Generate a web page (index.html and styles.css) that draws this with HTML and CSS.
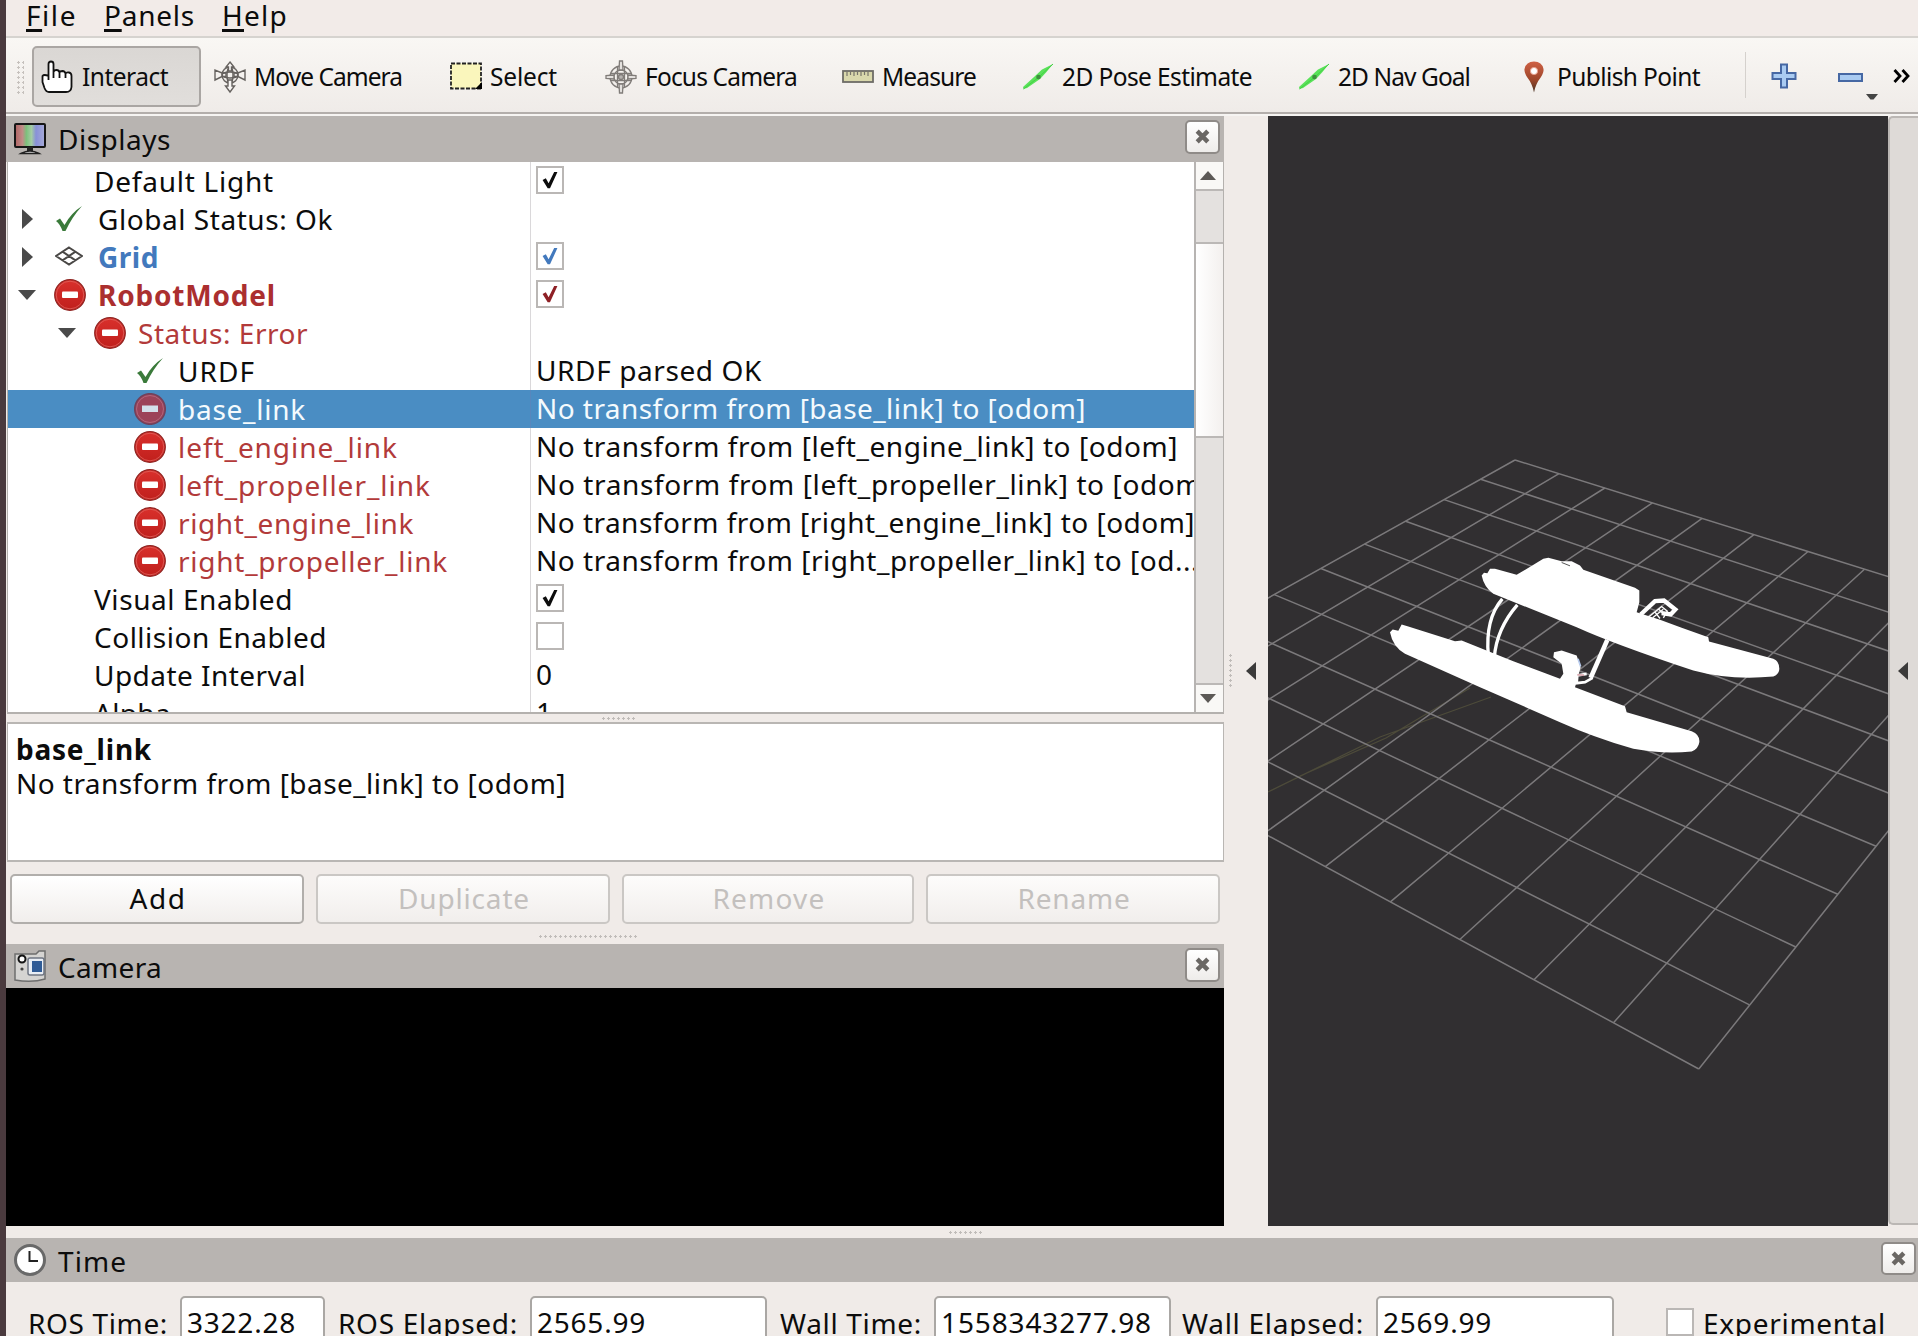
FILE: index.html
```html
<!DOCTYPE html>
<html lang="en">
<head>
<meta charset="utf-8">
<title>RViz</title>
<link rel="stylesheet" href="styles.css">
</head>
<body>
<svg width="0" height="0" class="defs">
  <defs>
    <linearGradient id="red" x1="0" y1="0" x2="0" y2="1"><stop offset="0" stop-color="#d9302c"/><stop offset="1" stop-color="#c01f1c"/></linearGradient>
    <linearGradient id="pin" x1="0" y1="0" x2="0" y2="1"><stop offset="0" stop-color="#cf6145"/><stop offset=".6" stop-color="#9c4529"/><stop offset="1" stop-color="#4b3526"/></linearGradient>
    <linearGradient id="rgb"><stop offset="0" stop-color="#b06464"/><stop offset=".25" stop-color="#c08c88"/><stop offset=".38" stop-color="#7cc07c"/><stop offset=".55" stop-color="#a4cca4"/><stop offset=".7" stop-color="#8890d8"/><stop offset="1" stop-color="#a8acd8"/></linearGradient>
    <symbol id="error" viewBox="0 0 32 32"><circle cx="16" cy="16" r="15.3" fill="url(#red)" stroke="#8e2320" stroke-width="1.2"/><circle cx="16" cy="16" r="13.8" fill="none" stroke="#e0645e" stroke-width=".8"/><rect x="8" y="12.5" width="16" height="6.5" rx="1" fill="#fff"/></symbol>
    <symbol id="ok" viewBox="0 0 28 28"><path d="M1 16 L5 13.5 L9.5 20 Q16 8 27 1 Q17 12 10.500 26 L7.500 26 Q5 19 1 16Z" fill="#3a7a3a"/></symbol>
    <symbol id="tick" viewBox="0 0 28 28"><path d="M6 14 L9.500 12 L12.500 17.500 L18.500 5.500 L22 5.500 L14 23 L11.500 23Z" fill="currentColor"/></symbol>
    <symbol id="close" viewBox="0 0 16 16"><path d="M3 3 L13 13 M13 3 L3 13" stroke="#6a6764" stroke-width="4.200"/></symbol>
    <symbol id="arrow" viewBox="0 0 32 28"><path d="M31 1 L20 6.500 L12 14 L1 24 L1.500 26 L5 25 L18 16 L24 9.500Z" fill="#5ae25a"/><path d="M31 1 L17 14 L1.500 26" stroke="#45d045" fill="none"/><circle cx="16.500" cy="14" r="2.300" fill="#3e8f3e"/></symbol>
  </defs>
</svg>

<div class="window">
  <nav class="menubar">
    <span class="t m-file" data-w="48"><u>F</u>ile</span><span class="t m-panels" data-w="88"><u>P</u>anels</span><span class="t m-help" data-w="63"><u>H</u>elp</span>
  </nav>

  <div class="toolbar">
    <div class="handle"></div>
    <div class="tools">
      <div class="tool active"><svg width="32" height="34" viewBox="0 0 32 34"><path d="M7.500 20 V4 Q7.500 1.500 10 1.500 Q12.500 1.500 12.500 4 V12 Q13 10 15.500 10 Q18 10 18.500 12.500 Q19 11 21.500 11 Q24 11.200 24.500 13.500 Q25.500 12 28 12.500 Q30.500 13 30.500 16 V27 Q30 32 25 32 H8 Q5 32 3.500 28 L1.500 22 V16 Q3 14 7.500 16 M12.500 12 V18 M18.500 13 V18 M24.500 14 V18" fill="#fff" stroke="#111" stroke-width="1.800"/></svg><span class="t" data-w="83">Interact</span></div>
      <div class="tool"><svg width="32" height="34" viewBox="0 0 32 34"><g fill="none" stroke="#66625f" stroke-width="1.400"><circle cx="16" cy="15" r="8"/><ellipse cx="16" cy="15" rx="8" ry="3"/><ellipse cx="16" cy="15" rx="3" ry="8"/><path fill="#f8f6f4" d="M16 2 L20 7 H17.500 V11 H14.500 V7 H12Z M16 32 L20.500 26 H18 V20 H14 V26 H11.500Z"/><path d="M1 10 V20 L8 16.500 H12 V13 H8Z M31 10 V20 L24 16.500 H20 V13 H24Z"/></g></svg><span class="t" data-w="145">Move Camera</span></div>
      <div class="tool"><svg width="32" height="34" viewBox="0 0 32 34"><rect x="1" y="3.500" width="30" height="25" fill="#faf6bc" stroke="#222" stroke-width="1.800" stroke-dasharray="4 1.500"/><path d="M25 29 H32 V22Z" fill="#000"/></svg><span class="t" data-w="64">Select</span></div>
      <div class="tool"><svg width="32" height="34" viewBox="0 0 32 34"><g fill="none" stroke="#807c79" stroke-width="1.300"><circle cx="16" cy="17" r="11"/><circle cx="16" cy="17" r="7"/><path d="M6 13.500 H26 M6 20.500 H26 M12.500 7 V27 M19.500 7 V27"/><path fill="#e4e1de" d="M14.500 1 H17.500 L18 10 H14Z M14.500 33 H17.500 L18 24 H14Z M1 15.500 V18.500 L9 19 V15Z M31 15.500 V18.500 L23 19 V15Z"/><circle cx="16" cy="17" r="2.500" fill="#b5b2af"/></g></svg><span class="t" data-w="149">Focus Camera</span></div>
      <div class="tool"><svg width="32" height="34" viewBox="0 0 32 34"><rect x="1" y="11" width="30" height="11" fill="#d9d8ac" stroke="#6d6c66" stroke-width="1.800"/><path d="M5 12v4M8.500 12v3M12 12v4M15.500 12v3M19 12v4M22.500 12v3M26 12v4" stroke="#77756a" stroke-width="1.200"/></svg><span class="t" data-w="91">Measure</span></div>
      <div class="tool"><svg width="32" height="28"><use href="#arrow"/></svg><span class="t" data-w="187">2D Pose Estimate</span></div>
      <div class="tool"><svg width="32" height="28"><use href="#arrow"/></svg><span class="t" data-w="129">2D Nav Goal</span></div>
      <div class="tool"><svg width="32" height="34" viewBox="0 0 32 34"><path d="M17 32.500 Q15.500 24 10 17 Q7 12 7.500 9 Q9 1.500 17 1.500 Q25 1.500 26.500 9 Q27 12 24 17 Q18.500 24 17 32.500Z" fill="url(#pin)"/><circle cx="17" cy="11" r="3.600" fill="#fff" stroke="#e8a08c"/></svg><span class="t" data-w="140">Publish Point</span></div>
    </div>
    <div class="tool-end">
      <svg width="26" height="26" viewBox="0 0 26 26"><path d="M10 1.500h6v8.500h8.500v6H16v8.500h-6V16H1.500v-6H10Z" fill="#a9cbf2" stroke="#4668a4" stroke-width="2"/></svg>
      <svg class="minus" width="42" height="40" viewBox="0 0 42 40"><rect x="2" y="13" width="23" height="7" fill="#a9cbf2" stroke="#4668a4" stroke-width="2"/><path d="M29 33h12l-4.500 5.500h-3Z" fill="#444"/></svg>
      <svg class="more" width="18" height="16" viewBox="0 0 18 16"><path d="M1.500 2 L7 8 L1.500 14 M9.500 2 L15 8 L9.500 14" fill="none" stroke="#000" stroke-width="2.800"/></svg>
    </div>
  </div>

  <main class="workspace">
    <section class="left">
      <header class="dock-title displays"><svg width="32" height="34" viewBox="0 0 32 34"><rect x="1" y="2" width="30" height="23" rx="1" fill="url(#rgb)" stroke="#161616" stroke-width="2"/><path d="M13 25h6v4h-6z" fill="#222"/><path d="M7 31.500q9-5 18 0z" fill="#ddd" stroke="#222" stroke-width="1.500"/></svg><span class="t" data-w="110">Displays</span><button class="close"><svg width="17" height="17"><use href="#close"/></svg></button></header>

      <div class="tree">
        <div class="rows">
          <div class="row"><div class="name l1"><span class="t" data-w="177">Default Light</span></div><div class="val"><i class="cb"><svg width="26" height="26"><use href="#tick"/></svg></i></div></div>
          <div class="row"><div class="name l0"><i class="right"></i><svg class="ic" width="28" height="28"><use href="#ok"/></svg><span class="t" data-w="232">Global Status: Ok</span></div><div class="val"></div></div>
          <div class="row"><div class="name l0"><i class="right"></i><svg class="ic" width="28" height="28" viewBox="0 0 28 28"><path d="M14 4.500 L27 13 L14 21.500 L1 13Z M7.500 8.700 L20.500 17.300 M20.500 8.700 L7.500 17.300" fill="none" stroke="#4a4846" stroke-width="2"/></svg><span class="t b blue" data-w="58">Grid</span></div><div class="val"><i class="cb blue"><svg width="26" height="26"><use href="#tick"/></svg></i></div></div>
          <div class="row"><div class="name l0"><i class="down"></i><svg class="er" width="32" height="32"><use href="#error"/></svg><span class="t b red" data-w="175">RobotModel</span></div><div class="val"><i class="cb darkred"><svg width="26" height="26"><use href="#tick"/></svg></i></div></div>
          <div class="row"><div class="name l2"><i class="down"></i><svg class="er" width="32" height="32"><use href="#error"/></svg><span class="t red" data-w="167">Status: Error</span></div><div class="val"></div></div>
          <div class="row"><div class="name l3"><svg class="ic" width="28" height="28"><use href="#ok"/></svg><span class="t" data-w="74">URDF</span></div><div class="val"><span class="t" data-w="223">URDF parsed OK</span></div></div>
          <div class="row sel"><div class="name l3"><svg class="er" width="32" height="32" viewBox="0 0 32 32"><circle cx="16" cy="16" r="15.300" fill="#9c4259" stroke="#70425c" stroke-width="1.500"/><circle cx="16" cy="16" r="13.500" fill="none" stroke="#b2667c"/><rect x="8" y="12.500" width="16" height="6.500" fill="#d3dfeb"/></svg><span class="t" data-w="125">base_link</span></div><div class="val"><span class="t" data-w="547">No transform from [base_link] to [odom]</span></div></div>
          <div class="row"><div class="name l3"><svg class="er" width="32" height="32"><use href="#error"/></svg><span class="t red" data-w="217">left_engine_link</span></div><div class="val"><span class="t" data-w="639">No transform from [left_engine_link] to [odom]</span></div></div>
          <div class="row"><div class="name l3"><svg class="er" width="32" height="32"><use href="#error"/></svg><span class="t red" data-w="250">left_propeller_link</span></div><div class="val"><span class="t" data-w="673">No transform from [left_propeller_link] to [odom]</span></div></div>
          <div class="row"><div class="name l3"><svg class="er" width="32" height="32"><use href="#error"/></svg><span class="t red" data-w="233">right_engine_link</span></div><div class="val"><span class="t" data-w="656">No transform from [right_engine_link] to [odom]</span></div></div>
          <div class="row"><div class="name l3"><svg class="er" width="32" height="32"><use href="#error"/></svg><span class="t red" data-w="267">right_propeller_link</span></div><div class="val"><span class="t" data-w="660">No transform from [right_propeller_link] to [od...</span></div></div>
          <div class="row"><div class="name l1"><span class="t" data-w="196">Visual Enabled</span></div><div class="val"><i class="cb"><svg width="26" height="26"><use href="#tick"/></svg></i></div></div>
          <div class="row"><div class="name l1"><span class="t" data-w="230">Collision Enabled</span></div><div class="val"><i class="cb"></i></div></div>
          <div class="row"><div class="name l1"><span class="t" data-w="209">Update Interval</span></div><div class="val"><span class="t">0</span></div></div>
          <div class="row"><div class="name l1"><span class="t" data-w="74">Alpha</span></div><div class="val"><span class="t">1</span></div></div>
        </div>
        <div class="scroll"><div class="sbtn"><i class="up"></i></div><div class="track"><div class="thumb"></div></div><div class="sbtn end"><i class="dn"></i></div></div>
      </div>

      <div class="split thin"><i class="dots"></i></div>
      <div class="desc"><div class="t b" data-w="133">base_link</div><div class="t" data-w="547">No transform from [base_link] to [odom]</div></div>
      <div class="buttons"><button><span class="t" data-w="54">Add</span></button><button disabled><span class="t" data-w="129">Duplicate</span></button><button disabled><span class="t" data-w="110">Remove</span></button><button disabled><span class="t" data-w="110">Rename</span></button></div>
      <div class="split"><i class="dots long"></i></div>

      <header class="dock-title"><svg width="32" height="34" viewBox="0 0 32 34"><path d="M1 5 H22 L25 2 H31 V30 Q18 34 1 31Z" fill="#d5d4d2" stroke="#6d6d6d" stroke-width="1.500"/><circle cx="8" cy="10" r="3.500" fill="#fff" stroke="#111" stroke-width="2"/><circle cx="8" cy="20" r="1.600" fill="#444"/><rect x="14" y="9" width="16" height="17" rx="2" fill="#e9eef5" stroke="#6f7683" stroke-width="1.500"/><rect x="18" y="12" width="10" height="11" fill="#2f5b96"/></svg><span class="t" data-w="101">Camera</span><button class="close"><svg width="17" height="17"><use href="#close"/></svg></button></header>
      <div class="camera-view"></div>
    </section>

    <div class="collapse"><i class="vdots"></i><i class="left-tri"></i></div>

    <section class="view3d">
      <svg width="620" height="1110" viewBox="1268 116 620 1110">
        <path class="axis" d="M1268 792 L1380 737 L1491 697 M1470 688 L1386 738 L1300 776"/>
        <g class="grid">
          <path d="M1515 460L1052.200 718.700M1559 473.700L1100.800 745M1604.800 488L1152.100 772.800M1652.400 502.900L1206.500 802.300M1702.100 518.400L1264.100 833.500M1753.900 534.600L1325.300 866.600M1808 551.500L1390.400 901.900M1864.500 569.200L1459.800 939.500M1923.600 587.600L1534 979.700M1985.500 606.900L1613.500 1022.700M2050.400 627.200L1698.800 1069"/>
          <path d="M1515 460L2050.400 627.200M1480.600 479.200L2026.500 657.200M1444.200 499.600L2000.900 689.400M1405.600 521.200L1973.300 724.100M1364.600 544.100L1943.500 761.500M1320.900 568.500L1911.200 802.100M1274.300 594.600L1876.100 846.200M1224.500 622.400L1837.800 894.300M1171.200 652.200L1795.800 947M1113.900 684.200L1749.500 1004.900M1052.200 718.700L1698.800 1069"/>
        </g>
        <g transform="translate(1380 540.500) scale(.33333)">
          <path fill="#fff" d="M305 105L312 97L322 98L330 85L345 85L410 103L490 55L505 52L545 62L575 62L600 75L610 88L765 142L778 150L778 185L770 215L840 238L905 262L985 290L987 303L1180 355Q1198 362 1198 385Q1198 402 1180 408Q1050 420 940 390Q700 310 590 260L340 160Q312 140 305 105Z"/>
          <path fill="#fff" d="M30 275L38 267L55 271L65 252L85 258L225 302L245 300L400 362L540 415L550 400L545 370L520 350L522 335L545 330L590 345L602 380L585 440L735 497L740 515L935 572Q960 582 958 605Q955 625 935 633Q850 642 760 625Q640 590 540 545L300 440L75 340Q38 318 30 275Z"/>
          <g fill="none" stroke="#fff" stroke-width="10"><path d="M367 175Q315 235 325 345M412 193Q350 265 343 350"/><path stroke-width="14" d="M682 298L632 412"/><path stroke-width="8" d="M638 412L615 425L590 428L592 405L620 400"/><path stroke-width="13" d="M782 222L825 182L852 180L886 207L872 222L845 218"/><path stroke-width="4" d="M805 230L845 198L862 212L850 232M818 232L850 206M825 215L840 234M835 205L855 225"/></g>
          <path d="M545 66L570 76" stroke="#555" stroke-width="3"/><path d="M594 355L602 378" stroke="#b9cdf0" stroke-width="5"/><path d="M592 403L612 404" stroke="#c88690" stroke-width="4"/>
        </g>
      </svg>
    </section>
    <div class="right-bar"><i class="left-tri"></i></div>
  </main>

  <div class="split wide"><i class="dots"></i></div>
  <header class="dock-title time"><svg width="32" height="34" viewBox="0 0 32 34"><circle cx="16" cy="17" r="14.500" fill="#fff" stroke="#696969" stroke-width="3"/><path d="M15.500 8V18H24" fill="none" stroke="#222" stroke-width="2"/></svg><span class="t" data-w="66">Time</span><button class="close"><svg width="17" height="17"><use href="#close"/></svg></button></header>
  <div class="times">
    <label class="lb"><span class="t" data-w="137">ROS Time:</span></label><div class="field"><span class="t" data-w="106">3322.28</span></div>
    <label class="lb"><span class="t" data-w="177">ROS Elapsed:</span></label><div class="field"><span class="t" data-w="106">2565.99</span></div>
    <label class="lb"><span class="t" data-w="139">Wall Time:</span></label><div class="field"><span class="t" data-w="208">1558343277.98</span></div>
    <label class="lb"><span class="t" data-w="179">Wall Elapsed:</span></label><div class="field"><span class="t" data-w="106">2569.99</span></div>
    <div class="exp"><i class="cb"></i><span class="t" data-w="180">Experimental</span></div>
  </div>
</div>
<script src="fit.js"></script>
</body>
</html>
```
FILE: fit.js
```js
// Tracks each label so that it fills its nominal width in whichever font is installed.
document.querySelectorAll('.t[data-w]').forEach(function (el) {
  var range = document.createRange();
  range.selectNodeContents(el);
  var natural = range.getBoundingClientRect().width;
  var chars = el.textContent.length;
  el.style.letterSpacing = ((Number(el.dataset.w) + 3 - natural) / chars) + 'px';
});
```
FILE: styles.css
```css
* { box-sizing: border-box; }
body {
  margin: 0;
  width: 1918px;
  height: 1336px;
  overflow: hidden;
  background: #f0ebe8;
  color: #0c0c0c;
  font: 28px/38px "Noto Sans", "Open Sans", sans-serif;
}
.defs { position: absolute; }
i { display: block; flex: none; }
svg { display: block; flex: none; }
button { padding: 0; font: inherit; color: inherit; }
.t { white-space: pre; flex: none; }
.b { font-weight: 700; }
.blue { color: #4279bd; }
.red { color: #b23a3a; }
.b.red { color: #ab2f2f; }
.darkred { color: #8e2025; }

.window { height: 1336px; border-left: 6px solid #4a3a3e; display: flex; flex-direction: column; overflow: hidden; }

.menubar { height: 38px; flex: none; display: flex; padding-left: 20px; border-bottom: 2px solid #d6d3cf; background: #f2ebe8; line-height: 31px; }
.menubar u { text-decoration: underline; text-decoration-thickness: 3px; text-underline-offset: 3px; text-decoration-skip-ink: none; }
.m-file { width: 78px; }
.m-panels { width: 118px; }

.toolbar { height: 78px; flex: none; display: flex; border-bottom: 2px solid #f6f4f2; box-shadow: inset 0 -2px #b3aeab; background: linear-gradient(#f9f7f4, #efebe8); font-size: 24.500px; }
.handle { width: 8px; height: 34px; margin: 22px 8px 0 10px; background: radial-gradient(circle, #c6c1bd 1px, transparent 1.300px) 0 0 / 5px 5px; }
.tools { display: grid; grid-template-columns: 172px 236px 155px 237px 180px 276px 219px 238px; padding: 8px 0 9px; }
.tool { display: flex; align-items: center; padding-left: 10px; }
.tool .t { margin-left: 8px; }
.tool.active { width: 169px; height: 61px; padding-left: 8px; border: 2px solid #aaa6a3; border-radius: 5px; background: linear-gradient(#dad7d4, #e1dedb); }
.tool.active svg { margin-left: -1px; }
.tool.active .t { margin-left: 9px; }
.tool-end { flex: 1; display: flex; align-items: center; height: 46px; margin-top: 14px; border-left: 1px solid #d5d1cd; padding: 1px 0 0 25px; }
.minus { margin: 10px 14px 0 40px; }

.workspace { height: 1110px; flex: none; display: flex; }
.left { width: 1218px; flex: none; display: flex; flex-direction: column; }
.dock-title { height: 44px; flex: none; display: flex; align-items: center; padding: 0 4px 0 8px; background: #b8b4b1; }
.dock-title.displays { height: 46px; }
.dock-title .t { margin: 1px 0 0 12px; }
.dock-title.displays .t { margin-top: -1px; }
.close { width: 35px; height: 34px; margin: 0 0 3px auto; display: flex; align-items: center; justify-content: center; background: linear-gradient(#fff, #eeecea); border: 2px solid #8f8b88; border-radius: 5px; }
.displays .close { margin-bottom: 5px; }

.tree { height: 552px; flex: none; margin-left: 1px; display: flex; overflow: hidden; background: #fff; border: solid #b4b1ae; border-width: 0 1px 2px; }
.rows { width: 1186px; flex: none; overflow: hidden; }
.row { height: 38px; display: flex; }
.name { width: 523px; flex: none; display: flex; align-items: center; border-right: 1px solid #dad8da; }
.l1 { padding-left: 86px; }
.l0 { padding-left: 12px; }
.l2 { padding-left: 52px; }
.l3 { padding-left: 126px; }
.name .t { margin-top: -1px; }
.ic { margin: 0 14px 0 2px; }
.er { margin: 0 12px 1px 0; }
.name .right + .ic { margin-left: 22px; margin-right: 15px; }
.right { margin-left: 2px; border: solid transparent; border-width: 10px 0 10px 11px; border-left-color: #4a4a4a; }
.down { margin-left: -2px; border: solid transparent; border-width: 10px 9px 0; border-top-color: #4a4a4a; }
.down + .er { margin-left: 18px; }
.val { flex: 1; min-width: 0; display: flex; padding-left: 5px; overflow: hidden; }
.cb { width: 28px; height: 28px; margin-top: 4px; border: 2px solid #bab7b5; background: #fff; display: flex; align-items: center; justify-content: center; }
.row .val .t { margin-top: -1px; }
.sel { background: #4a8dc3; color: #f4fafd; }
.sel .name { border-color: #5787bd; }
.scroll { flex: 1; display: flex; flex-direction: column; border-left: 2px solid #b7b4b2; background: #e4e1df; }
.sbtn { height: 29px; flex: none; display: flex; align-items: center; justify-content: center; padding-right: 3px; background: #f9f8f6; border-bottom: 2px solid #bbb8b6; }
.sbtn.end { border-bottom: 0; border-top: 2px solid #bbb8b6; }
.up { border: solid transparent; border-width: 0 8px 9px; border-bottom-color: #5c5956; }
.dn { border: solid transparent; border-width: 9px 8px 0; border-top-color: #5c5956; }
.track { flex: 1; padding-top: 51px; }
.thumb { height: 196px; background: linear-gradient(90deg, #fff, #f3f0ee); border: solid #bbb8b6; border-width: 2px 0; }

.split { height: 20px; flex: none; display: flex; justify-content: center; align-items: center; }
.split.thin { height: 8px; }
.split.wide { height: 12px; }
.dots { width: 34px; height: 5px; margin-left: 5px; background: radial-gradient(circle, #c0bcb9 1px, transparent 1.300px) 0 0 / 5px 5px; }
.dots.long { width: 100px; margin-right: 60px; margin-top: 4px; }
.desc { height: 140px; flex: none; margin-left: 1px; padding: 8px 0 0 8px; border: 2px solid #b9b6b3; border-left-width: 1px; border-right-width: 1px; background: #fff; line-height: 34px; }
.desc .t { width: max-content; }
.buttons { flex: none; display: grid; grid-template-columns: 294px 294px 292px 294px; column-gap: 12px; height: 62px; padding: 12px 0 0 4px; }
.buttons button { height: 50px; display: flex; justify-content: center; align-items: center; padding: 0 0 2px 2px; border: 2px solid #b1aeab; border-radius: 5px; background: linear-gradient(#fff, #f1eeec); }
.buttons button:disabled { color: #c3c0be; border-color: #cac7c4; background: linear-gradient(#fdfcfb, #f1eeec); }
.camera-view { flex: 1; background: #000; }

.collapse { width: 44px; flex: none; display: flex; align-items: center; padding-left: 4px; }
.vdots { width: 5px; height: 36px; margin-right: 13px; background: radial-gradient(circle, #c0bcb9 1px, transparent 1.300px) 0 0 / 5px 5px; }
.left-tri { border: solid transparent; border-width: 9px 10px 9px 0; border-right-color: #3b3a3a; }
.view3d { width: 620px; flex: none; background: #312f31; }
.grid { fill: none; stroke: #7b797b; stroke-width: 1.500; }
.axis { fill: none; stroke: #4d4b3a; stroke-width: 1.300; }
.right-bar { width: 30px; height: 1109px; display: flex; align-items: center; padding-left: 8px; background: #dedad7; border: 2px solid #bbb7b4; border-right: 0; border-radius: 5px 0 0 5px; }

.time .close { margin-right: -2px; height: 33px; }
.times { display: grid; grid-template-columns: 174px 145px 205px 237px 167px 237px 205px 238px 1fr; padding-top: 14px; }
.lb { display: flex; justify-content: flex-end; padding: 8px 12px 0 0; }
.field { height: 60px; padding: 6px 0 0 5px; background: #fff; border: 2px solid #aaa7a4; border-radius: 5px; line-height: 36px; }
.exp { display: flex; padding: 8px 0 0 52px; }
.exp .cb { margin-top: 4px; }
.exp .t { margin-left: 9px; }
```
